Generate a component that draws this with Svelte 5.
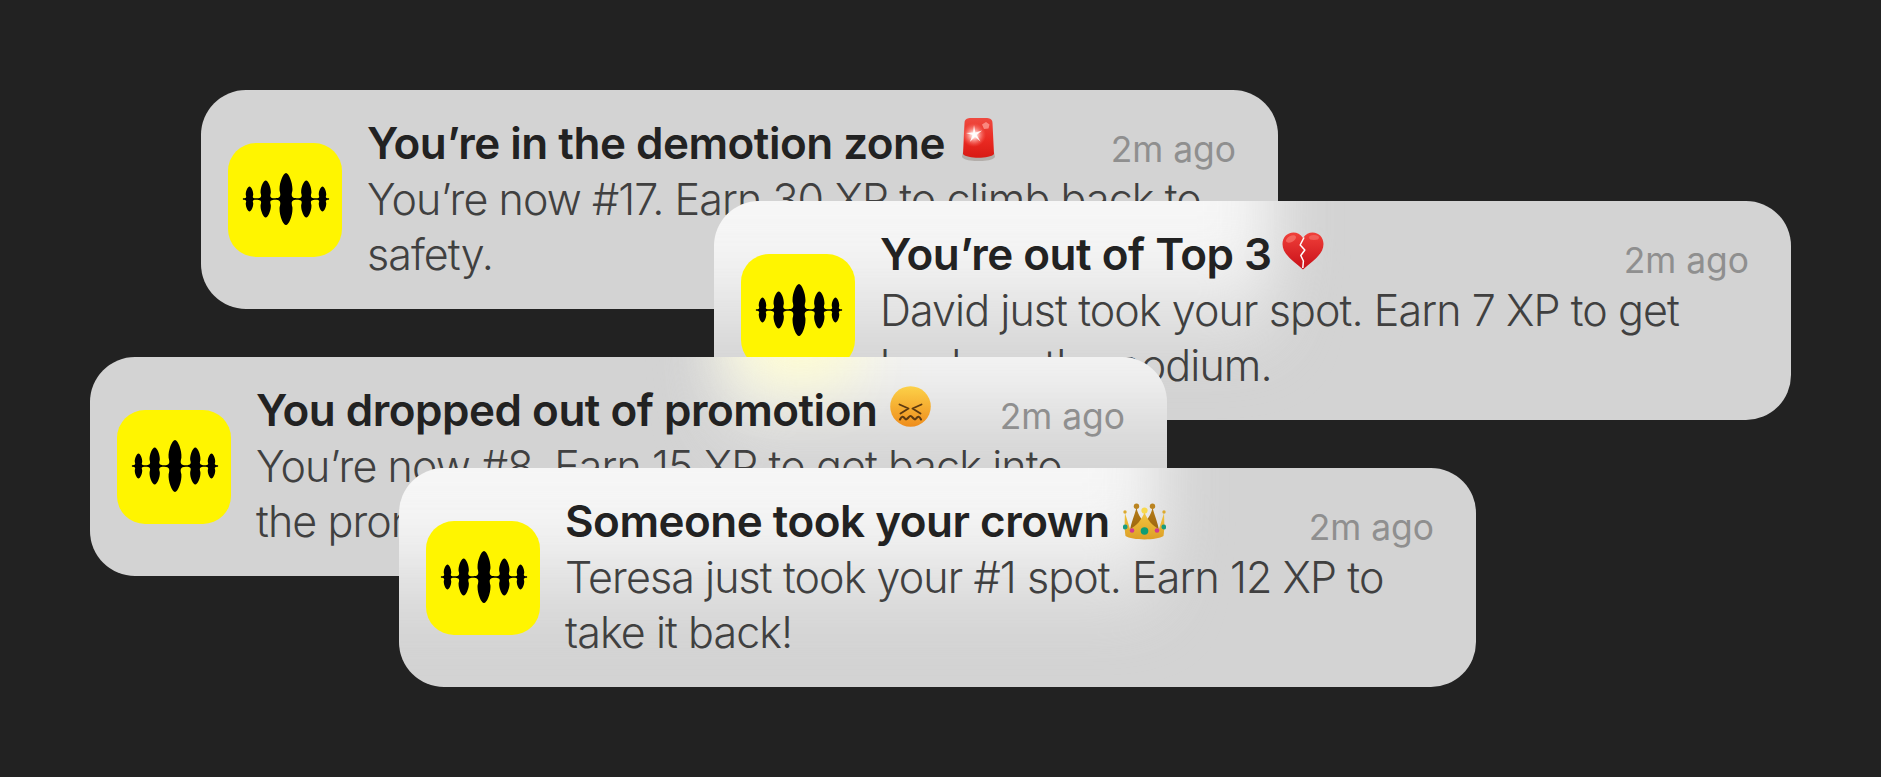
<script>
	const lobes = [
		{ x: 21.5, h: 12.5, w: 3.7, f: 3 },
		{ x: 37.7, h: 18.5, w: 5.1, f: 4.4 },
		{ x: 58, h: 26, w: 6.4, f: 4.4 },
		{ x: 78.3, h: 18.5, w: 5.1, f: 4.4 },
		{ x: 94.5, h: 12.5, w: 3.7, f: 3 }
	];

	// Waveform mark: spindle lobes flaring into a thin line, mirrored around the axis
	function wavePath(cy) {
		const half = (sign, list, dir) => {
			let d = '';
			for (const { x, h, w, f } of list) {
				const t = cy - sign * h;
				const a = cy - sign * 0.7;
				const side = cy - sign * h * 0.32;
				d += `L${x - dir * (w + f)} ${a}`;
				d += `C${x - dir * (w * 0.8)} ${a} ${x - dir * (w * 0.8)} ${cy - sign * h * 0.14} ${x - dir * w} ${side}`;
				d += `C${x - dir * w * 1.1} ${cy - sign * h * 0.6} ${x - dir * w * 0.45} ${t} ${x} ${t}`;
				d += `C${x + dir * w * 0.45} ${t} ${x + dir * w * 1.1} ${cy - sign * h * 0.6} ${x + dir * w} ${side}`;
				d += `C${x + dir * (w * 0.8)} ${cy - sign * h * 0.14} ${x + dir * (w * 0.8)} ${a} ${x + dir * (w + f)} ${a}`;
			}
			return d;
		};
		return `M15 ${cy}${half(1, lobes, 1)}L101 ${cy}${half(-1, [...lobes].reverse(), -1)}Z`;
	}
	const wave = wavePath(56);

	const cards = [
		{ id: 'demotion', title: 'You’re in the demotion zone', emoji: 'siren', body: 'You’re now #17. Earn 30 XP to climb back to safety.' },
		{ id: 'top', title: 'You’re out of Top 3', emoji: 'heart', body: 'David just took your spot. Earn 7 XP to get back on the podium.' },
		{ id: 'promotion', title: 'You dropped out of promotion', emoji: 'face', body: 'You’re now #8. Earn 15 XP to get back into the promotion zone.' },
		{ id: 'crown', title: 'Someone took your crown', emoji: 'crown', body: 'Teresa just took your #1 spot. Earn 12 XP to take it back!' }
	];
</script>

{#snippet emoji(name)}
	{#if name === 'siren'}
		<svg class="emoji siren" viewBox="0 0 33 43" aria-hidden="true">
			<defs>
				<linearGradient id="sirenBody" x1="0" y1="0" x2="0" y2="1">
					<stop offset="0" stop-color="#ee4a40" />
					<stop offset="0.55" stop-color="#ea2a22" />
					<stop offset="1" stop-color="#d81a14" />
				</linearGradient>
				<radialGradient id="sirenFlash">
					<stop offset="0" stop-color="#fff" />
					<stop offset="0.3" stop-color="#ffd0ca" stop-opacity="0.9" />
					<stop offset="1" stop-color="#ff6a60" stop-opacity="0" />
				</radialGradient>
			</defs>
			<path d="M1 34h31l1 5c-3 5.500-30 5.500-33 0z" fill="#b3aeaa" />
			<path d="M2.500 5c0-3 1.500-4.500 4-4.800 6-.5 14-.5 20 0 2.500.3 4 1.800 4 4.800l1.500 31c-4 5-27 5-31 0z" fill="url(#sirenBody)" />
			<circle cx="12" cy="17" r="12" fill="url(#sirenFlash)" />
			<path d="M12 7l1.300 7.500 6.700-2-5.300 4.500 3.800 6.500-5.500-4.500-5 4.800 2.500-6.800-6.500-2 7-.5z" fill="#fff" opacity="0.9" />
			<path d="M20 6.500l4-2.500 3.500 2.500-1 4-4.500.5z" fill="#ffa69e" opacity="0.7" />
		</svg>
	{:else if name === 'heart'}
		<svg class="emoji heart" viewBox="0 0 42 38" aria-hidden="true">
			<defs>
				<linearGradient id="heartFill" x1="0" y1="0" x2="0" y2="1">
					<stop offset="0" stop-color="#f0403a" />
					<stop offset="1" stop-color="#c80f18" />
				</linearGradient>
			</defs>
			<path d="M21 6C18.500 2.200 15 .5 11.500.5 5 .5.500 5.500.500 12c0 10.500 11 17 20.500 25.500C30.500 29 41.500 22.500 41.500 12 41.500 5.500 37 .5 30.500.5 27 .5 23.500 2.200 21 6z" fill="url(#heartFill)" />
			<ellipse cx="9" cy="7" rx="5.500" ry="3" fill="#fb8a80" opacity="0.55" transform="rotate(-28 9 7)" />
			<ellipse cx="32" cy="5.500" rx="5" ry="2.500" fill="#fb8a80" opacity="0.45" />
			<path d="M22 5.500l-3.800 7.500 4.600 5-4 5.500 2.600 5.500-.6 7" fill="none" stroke="#fff" stroke-width="1.500" stroke-linejoin="round" />
		</svg>
	{:else if name === 'face'}
		<svg class="emoji face" viewBox="0 0 41 41" aria-hidden="true">
			<defs>
				<linearGradient id="faceFill" x1="0" y1="0" x2="0" y2="1">
					<stop offset="0" stop-color="#fcd148" />
					<stop offset="1" stop-color="#ef8d1c" />
				</linearGradient>
			</defs>
			<circle cx="20.500" cy="20.500" r="20.300" fill="url(#faceFill)" />
			<path d="M9.500 18.500l9 4-8 5M31.500 18.500l-9 4 8 5" fill="none" stroke="#5e3a10" stroke-width="1.900" stroke-linecap="round" stroke-linejoin="round" />
			<path d="M10 33.500c1.700-3.500 3-3.500 5-.8 1.800 2.400 3.600-2.700 5.500-2.700s3.700 5.100 5.500 2.700c2-2.700 3.300-2.700 5 .8" fill="none" stroke="#5e3a10" stroke-width="2.100" stroke-linecap="round" stroke-linejoin="round" />
		</svg>
	{:else}
		<svg class="emoji crown" viewBox="0 0 43 37" aria-hidden="true">
			<defs>
				<linearGradient id="crownFill" x1="0" y1="0" x2="0" y2="1">
					<stop offset="0" stop-color="#f2c63e" />
					<stop offset="1" stop-color="#dd9f27" />
				</linearGradient>
				<linearGradient id="crownBack" x1="0" y1="0" x2="0" y2="1">
					<stop offset="0" stop-color="#b87e17" />
					<stop offset="1" stop-color="#99640f" />
				</linearGradient>
			</defs>
			<path d="M13.500 4C14.500 12 19 17 23 21L7 28C8 19 12 12 13.500 4zM29.500 4C28.500 12 24 17 20 21L36 28C35 19 31 12 29.500 4z" fill="url(#crownBack)" />
			<circle cx="13.500" cy="3.300" r="2.700" fill="#bb8420" />
			<circle cx="29.500" cy="3.300" r="2.700" fill="#bb8420" />
			<path d="M21.500 9C24 17 30 23 36 26L41 10C41.500 20 41.500 27 40.500 33 34 37.500 9 37.500 2.500 33 1.500 27 1.500 20 2 10L7 26C13 23 19 17 21.500 9z" fill="url(#crownFill)" />
			<circle cx="2" cy="9" r="1.700" fill="#dba92f" />
			<circle cx="41" cy="9" r="1.700" fill="#dba92f" />
			<circle cx="21.500" cy="7.500" r="3.100" fill="#f8d94e" />
			<circle cx="2.200" cy="24" r="2.400" fill="#1a9c80" />
			<circle cx="40.800" cy="24" r="2.400" fill="#1a9c80" />
			<circle cx="9" cy="27.500" r="2.300" fill="#d23a8c" />
			<circle cx="34" cy="27.500" r="2.300" fill="#d23a8c" />
			<ellipse cx="21.500" cy="28" rx="3.800" ry="3.700" fill="#0f9d74" />
		</svg>
	{/if}
{/snippet}

<main class="canvas">
	{#each cards as card (card.id)}
		<article class="card {card.id}">
			<div class="glare">
				<span class="blob"></span>
				{#if card.id === 'promotion'}
					<span class="blob tint"></span>
				{/if}
			</div>
			<div class="app-icon">
				<svg viewBox="0 0 114 114" width="114" height="114" aria-hidden="true">
					<path d={wave} fill="#000" />
				</svg>
			</div>
			<div class="content">
				<div class="head">
					<h3>{card.title}{@render emoji(card.emoji)}</h3>
					<span class="time">2m ago</span>
				</div>
				<p>{card.body}</p>
			</div>
		</article>
	{/each}
</main>

<style>
	:global(body) {
		background: #222222;
	}

	.canvas {
		position: relative;
		width: 1881px;
		height: 777px;
		overflow: hidden;
		background: #222222;
		font-family: Inter, "Liberation Sans", sans-serif;
	}

	/* the cards overlap each other on a free canvas */
	.card {
		position: absolute;
		box-sizing: border-box;
		width: 1077px;
		height: 219px;
		padding: 0 42px 0 27px;
		display: flex;
		align-items: center;
		gap: 25px;
		border-radius: 45px;
		background: #d3d3d3;
	}

	.demotion {
		left: 201px;
		top: 90px;
	}

	.top {
		left: 714px;
		top: 201px;
	}

	.promotion {
		left: 90px;
		top: 357px;
	}

	.crown {
		left: 399px;
		top: 468px;
	}

	.glare {
		position: absolute;
		inset: 0;
		overflow: hidden;
		border-radius: inherit;
	}

	.blob {
		position: absolute;
		filter: blur(32px);
		background: linear-gradient(#f6f6f6 60%, rgba(246, 246, 246, 0) 100%);
	}

	.demotion .blob {
		display: none;
	}

	.top .blob {
		left: -400px;
		top: -110px;
		width: 960px;
		height: 270px;
	}

	.promotion .blob {
		left: 632px;
		top: -150px;
		width: 600px;
		height: 250px;
	}

	.promotion .blob.tint {
		left: 651px;
		top: -104px;
		width: 114px;
		height: 130px;
		background: #fffdcc;
	}

	.crown .blob {
		left: -400px;
		top: -110px;
		width: 1160px;
		height: 270px;
	}

	.app-icon,
	.content {
		position: relative;
	}

	.app-icon {
		flex: none;
		width: 114px;
		height: 114px;
		border-radius: 28px;
		background: #fff500;
	}

	.app-icon svg {
		display: block;
	}

	.content {
		flex: 1;
		min-width: 0;
		padding-bottom: 3px;
	}

	.head {
		display: flex;
		align-items: center;
		justify-content: space-between;
		margin-bottom: 1px;
	}

	h3 {
		margin: 0;
		display: flex;
		align-items: center;
		height: 52px;
		font-size: 44px;
		line-height: 52px;
		font-weight: 600;
		letter-spacing: -0.5px;
		color: #222222;
	}

	.emoji {
		display: block;
		flex: none;
		margin-left: 13px;
		margin-top: -6px;
	}

	.emoji.siren {
		width: 33px;
		height: 43px;
		margin-left: 17px;
	}

	.emoji.heart {
		width: 42px;
		height: 38px;
		margin-left: 10px;
	}

	.emoji.face {
		width: 41px;
		height: 41px;
	}

	.emoji.crown {
		width: 43px;
		height: 37px;
		margin-top: 2px;
	}

	.time {
		flex: none;
		font-size: 35.4px;
		font-weight: 400;
		color: #8f8f8f;
		margin-top: 14px;
	}

	p {
		margin: 0;
		max-width: 860px;
		font-size: 43px;
		line-height: 55px;
		font-weight: 360;
		letter-spacing: -0.92px;
		color: #404040;
	}
</style>
